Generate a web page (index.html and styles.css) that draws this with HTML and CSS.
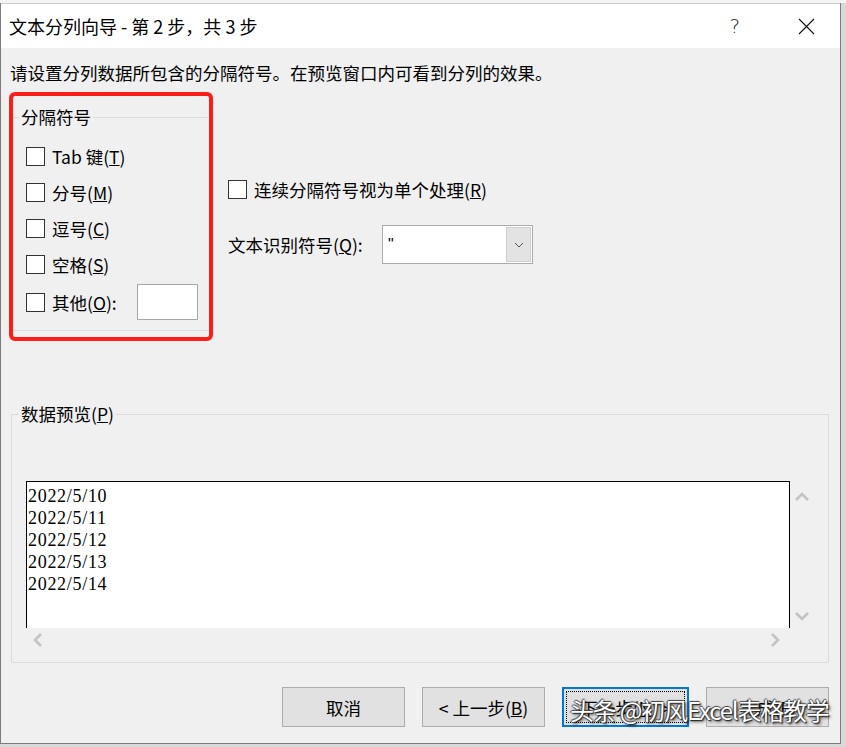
FILE: index.html
```html
<!DOCTYPE html>
<html lang="zh-CN">
<head>
<meta charset="utf-8">
<title>文本分列向导</title>
<link rel="stylesheet" href="styles.css">
</head>
<body>
<div class="screen">
  <div class="bgstrip"></div>
  <div class="dialog">
    <div class="titlebar">
      <span class="title">文本分列向导 - 第 2 步，共 3 步</span>
      <span class="help">?</span>
      <svg class="close" width="17" height="17" viewBox="0 0 17 17"><path d="M1 1 L16 16 M16 1 L1 16" stroke="#111" stroke-width="1.1" fill="none"/></svg>
    </div>
    <div class="content">
      <p class="intro">请设置分列数据所包含的分隔符号。在预览窗口内可看到分列的效果。</p>
      <div class="top">
        <div class="highlight">
          <fieldset class="delims">
            <legend>分隔符号</legend>
            <label class="row"><span class="cb"></span><span>Tab 键(<u>T</u>)</span></label>
            <label class="row"><span class="cb"></span><span>分号(<u>M</u>)</span></label>
            <label class="row"><span class="cb"></span><span>逗号(<u>C</u>)</span></label>
            <label class="row"><span class="cb"></span><span>空格(<u>S</u>)</span></label>
            <label class="row other"><span class="cb"></span><span>其他(<u>O</u>):</span><span class="otherbox"></span></label>
          </fieldset>
        </div>
        <div class="opts">
          <label class="row single"><span class="cb"></span><span>连续分隔符号视为单个处理(<u>R</u>)</span></label>
          <div class="qualifier">
            <span class="qlabel">文本识别符号(<u>Q</u>):</span>
            <div class="combo">
              <span class="val">"</span>
              <span class="drop"><svg width="10" height="6" viewBox="0 0 10 6"><path d="M1 1 L5 5 L9 1" stroke="#555" stroke-width="1" fill="none"/></svg></span>
            </div>
          </div>
        </div>
      </div>
      <fieldset class="preview">
        <legend>数据预览(<u>P</u>)</legend>
        <div class="pvrow">
          <div class="pvbox">
            <div>2022/5/10</div>
            <div>2022/5/11</div>
            <div>2022/5/12</div>
            <div>2022/5/13</div>
            <div>2022/5/14</div>
          </div>
          <div class="vscroll">
            <svg width="24" height="24" viewBox="0 0 24 24"><path d="M6 15 L12 9 L18 15" stroke="#c3c3c3" stroke-width="2.6" fill="none"/></svg>
            <svg width="24" height="24" viewBox="0 0 24 24"><path d="M6 9 L12 15 L18 9" stroke="#c3c3c3" stroke-width="2.6" fill="none"/></svg>
          </div>
        </div>
        <div class="hscroll">
          <svg width="12" height="24" viewBox="0 0 12 24"><path d="M9 6 L3 12 L9 18" stroke="#c3c3c3" stroke-width="2.6" fill="none"/></svg>
          <svg width="12" height="24" viewBox="0 0 12 24"><path d="M3 6 L9 12 L3 18" stroke="#c3c3c3" stroke-width="2.6" fill="none"/></svg>
        </div>
      </fieldset>
      <div class="buttons">
        <button class="btn">取消</button>
        <button class="btn">&lt; 上一步(<u>B</u>)</button>
        <button class="btn focus">下一步(<u>N</u>) &gt;</button>
        <button class="btn">完成(<u>F</u>)</button>
      </div>
    </div>
  </div>
  <div class="watermark">头条 @初风Excel表格教学</div>
</div>
</body>
</html>
```

FILE: styles.css
```css
html, body {
  margin: 0;
  padding: 0;
}
body {
  font-family: "Noto Sans CJK SC", "Noto Sans", sans-serif;
  font-size: 17.5px;
  color: #000;
}
.screen {
  position: relative;
  width: 846px;
  height: 747px;
  background: #d9d9d9;
  overflow: hidden;
}
.bgstrip {
  height: 3px;
  background: #f4f4f4;
}
.dialog {
  width: 841px;
  height: 741px;
  box-sizing: border-box;
  border: 1px solid #7c7c7c;
  border-top: none;
  background: #f0f0f0;
  display: flex;
  flex-direction: column;
}
.titlebar {
  height: 45px;
  flex: none;
  background: #fff;
  display: flex;
  align-items: center;
  padding-left: 8px;
  border-top: 1px solid #cfcfcf;
  box-sizing: border-box;
}
.title {
  flex: 1;
  font-size: 18px;
  line-height: 24px;
}
.help {
  font-family: "DejaVu Sans", sans-serif;
  font-weight: 200;
  font-size: 20px;
  color: #222;
  margin-right: 58px;
}
.close {
  margin-right: 25px;
}
.content {
  flex: 1;
}
.intro {
  margin: 14px 0 0 9px;
  line-height: 22px;
}
.top {
  display: flex;
  margin: 8px 0 0 8px;
}
.highlight {
  width: 204px;
  box-sizing: border-box;
  border: 4px solid #fd1d18;
  border-radius: 6px;
  padding: 11px 0 6px 0;
}
fieldset {
  margin: 0;
  min-width: 0;
}
.delims {
  padding: 11px 11px 8px 13px;
  border: none;
  border-top: 1px solid #dcdcdc;
  border-bottom: 1px solid #dcdcdc;
}
legend {
  padding: 0 2px;
  margin-left: -7px;
  line-height: 20px;
}
.row {
  display: flex;
  align-items: center;
  height: 36px;
  gap: 7px;
}
.row.other {
  height: 40px;
}
.cb {
  width: 19px;
  height: 19px;
  box-sizing: border-box;
  border: 1px solid #333;
  background: #fff;
  flex: none;
}
.otherbox {
  margin-left: auto;
  width: 61px;
  height: 36px;
  box-sizing: border-box;
  border: 1px solid #a6a6a6;
  background: #fff;
}
.opts {
  margin-left: 15px;
  padding-top: 85px;
}
.row.single {
  height: 24px;
}
.qualifier {
  display: flex;
  align-items: center;
  margin-top: 24px;
}
.qlabel {
  width: 154px;
}
.combo {
  width: 151px;
  height: 39px;
  box-sizing: border-box;
  border: 1px solid #ababab;
  background: #fff;
  display: flex;
}
.val {
  flex: 1;
  padding-left: 5px;
  line-height: 37px;
  font-family: "Liberation Sans", sans-serif;
  font-size: 16px;
}
.drop {
  width: 25px;
  margin: 1px;
  box-sizing: border-box;
  background: #e3e3e3;
  border: 1px solid #cdcdcd;
  display: flex;
  align-items: center;
  justify-content: center;
}
.preview {
  margin: 63px 0 0 10px;
  width: 818px;
  box-sizing: border-box;
  padding: 57px 13px 10px 14px;
  border: 1px solid #dcdcdc;
}
.pvrow {
  display: flex;
}
.pvbox {
  width: 764px;
  height: 147px;
  box-sizing: border-box;
  border: 1px solid #000;
  border-bottom: none;
  background: #fff;
  padding: 3px 0 0 1px;
  font-family: "Liberation Serif", serif;
  font-size: 18px;
  letter-spacing: 0.7px;
  line-height: 22px;
}
.vscroll {
  width: 24px;
  display: flex;
  flex-direction: column;
  justify-content: space-between;
  padding: 4px 0 0 0;
  height: 147px;
  box-sizing: border-box;
}
.hscroll {
  width: 764px;
  height: 24px;
  box-sizing: border-box;
  display: flex;
  justify-content: space-between;
  padding: 0 9px 0 6px;
}
.buttons {
  display: flex;
  justify-content: flex-end;
  gap: 17px;
  margin-top: 24px;
  padding-right: 11px;
}
.btn {
  position: relative;
  width: 123px;
  height: 40px;
  box-sizing: border-box;
  background: #e1e1e1;
  border: 1px solid #adadad;
  font-family: inherit;
  font-size: 17.5px;
  color: #000;
  padding: 0;
}
.btn.focus {
  width: 127px;
  border: 2px solid #0078d7;
}
.btn.focus::after {
  content: "";
  position: absolute;
  inset: 2px;
  border: 1px dotted #000;
}
.watermark {
  position: absolute;
  left: 570px;
  top: 692px;
  font-size: 24px;
  line-height: 36px;
  color: #fff;
  letter-spacing: -1.2px;
  text-shadow: 1px 1px 1px #222, -1px 0 1px #444, 0 -1px 1px #444, 2px 2px 3px rgba(0,0,0,0.6);
  white-space: nowrap;
}
```
